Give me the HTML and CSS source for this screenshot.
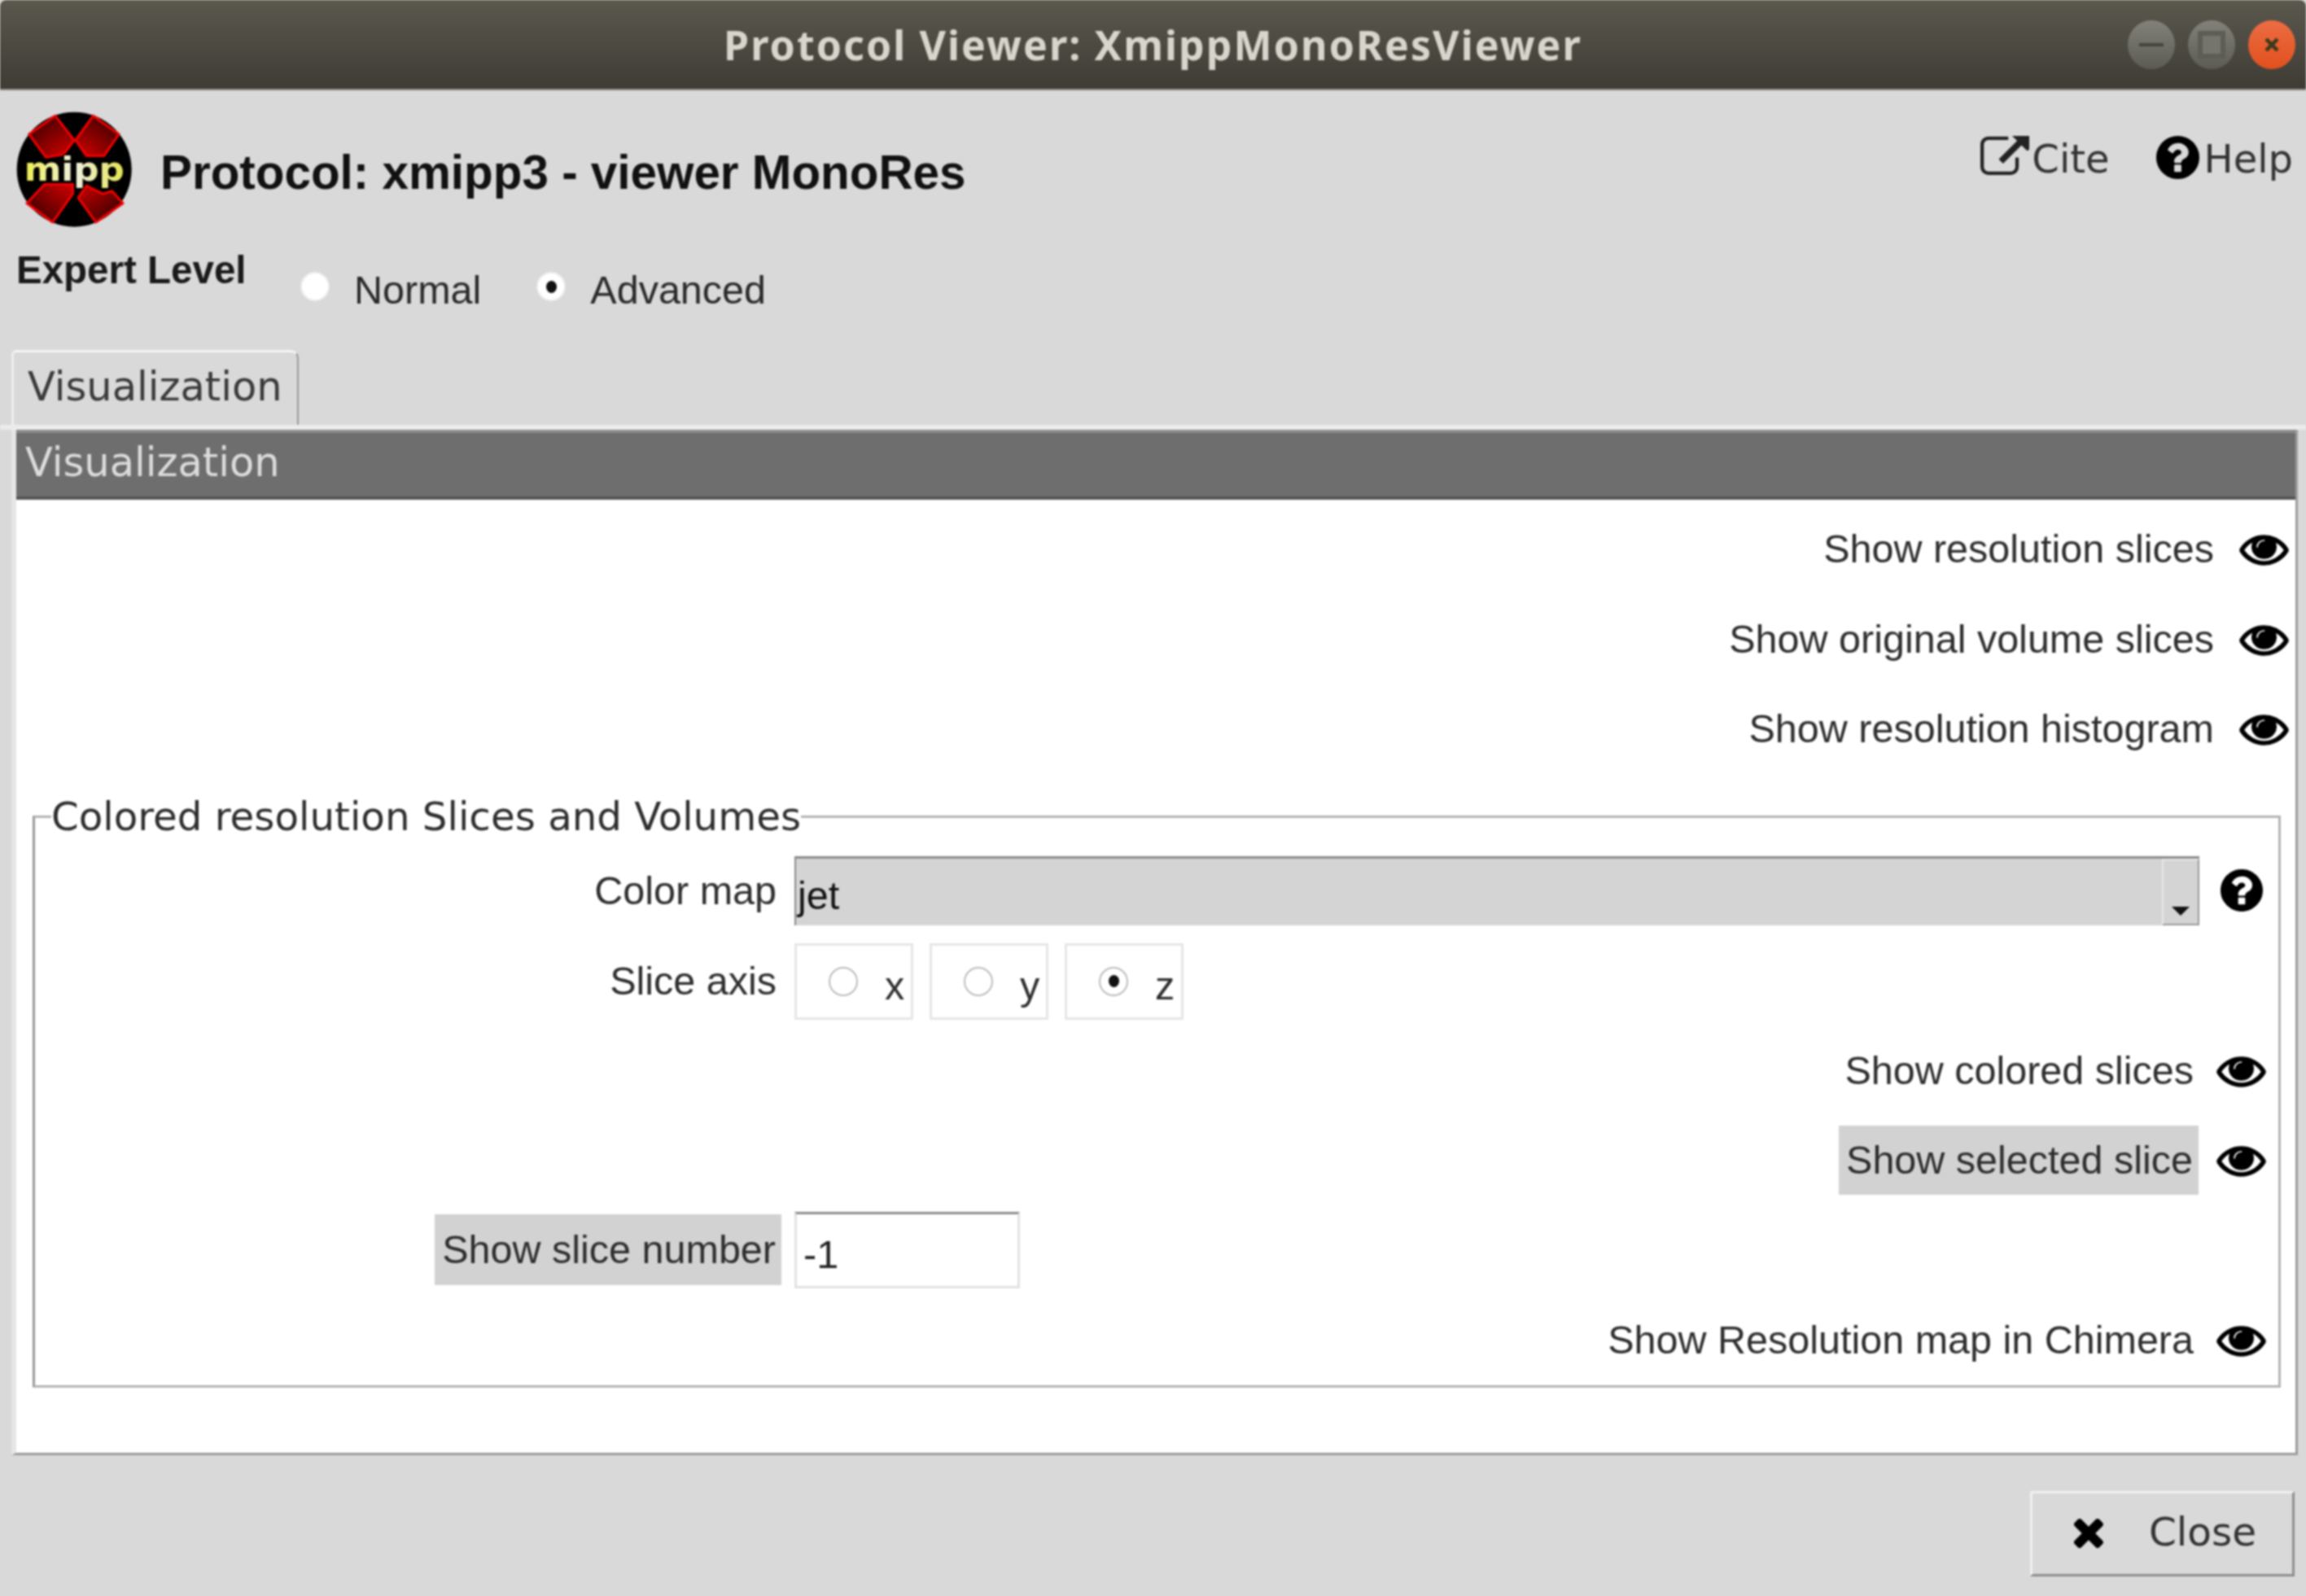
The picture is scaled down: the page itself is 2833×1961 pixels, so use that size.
FILE: index.html
```html
<!DOCTYPE html>
<html lang="en">
<head>
    <meta charset="UTF-8">
    <title>Protocol Viewer: XmippMonoResViewer</title>
    <link rel="stylesheet" href="styles.css">
</head>
<body>
    <svg class="icon-defs" aria-hidden="true">
        <symbol id="i-eye" viewBox="-30 226 1852 1340" preserveAspectRatio="none"><path stroke="#000" stroke-width="46" d="M1664 960q-152-236-381-353 61 104 61 225 0 185-131.5 316.5t-316.5 131.5-316.5-131.5-131.5-316.5q0-121 61-225-229 117-381 353 133 205 333.5 326.5t434.5 121.5 434.5-121.5 333.5-326.5zm-720-384q0-20-14-34t-34-14q-125 0-214.5 89.5t-89.5 214.5q0 20 14 34t34 14 34-14 14-34q0-86 61-147t147-61q20 0 34-14t14-34zm848 384q0 34-20 69-140 230-376.5 368.5t-499.5 138.5-499.5-139-376.5-368q-20-35-20-69t20-69q140-229 376.5-368t499.5-139 499.5 139 376.5 368q20 35 20 69z"/></symbol>
        <symbol id="i-help" viewBox="128 128 1536 1536"><path d="M1024 1376v-192q0-14-9-23t-23-9h-192q-14 0-23 9t-9 23v192q0 14 9 23t23 9h192q14 0 23-9t9-23zm256-672q0-88-55.5-163t-138.5-116-170-41q-243 0-371 213-15 24 8 42l132 100q7 6 19 6 16 0 25-12 53-68 86-92 34-24 86-24 48 0 85.5 26t37.5 59q0 38-20 61t-68 45q-63 28-115.5 86.5t-52.5 125.5v36q0 14 9 23t23 9h192q14 0 23-9t9-23q0-19 21.5-49.5t54.5-49.5q32-18 49-28.5t46-35 44.5-48 28-60.5 12.5-81zm384 192q0 209-103 385.5t-279.5 279.5-385.5 103-385.5-103-279.5-279.5-103-385.5 103-385.5 279.5-279.5 385.5-103 385.5 103 279.5 279.5 103 385.5z"/></symbol>
        <symbol id="i-link" viewBox="0 128 1792 1536"><path d="M1408 928v320q0 119-84.5 203.5t-203.5 84.5h-832q-119 0-203.5-84.5t-84.5-203.5v-832q0-119 84.5-203.5t203.5-84.5h704q14 0 23 9t9 23v64q0 14-9 23t-23 9h-704q-66 0-113 47t-47 113v832q0 66 47 113t113 47h832q66 0 113-47t47-113v-320q0-14 9-23t23-9h64q14 0 23 9t9 23zm384-864v512q0 26-19 45t-45 19-45-19l-176-176-652 652q-10 10-23 10t-23-10l-114-114q-10-10-10-23t10-23l652-652-176-176q-19-19-19-45t19-45 45-19h512q26 0 45 19t19 45z"/></symbol>
        <symbol id="i-times" viewBox="242 238 1248 1316"><path d="M1490 1322q0 40-28 68l-136 136q-28 28-68 28t-68-28l-294-294-294 294q-28 28-68 28t-68-28l-136-136q-28-28-28-68t28-68l294-294-294-294q-28-28-28-68t28-68l136-136q28-28 68-28t68 28l294 294 294-294q28-28 68-28t68 28l136 136q28 28 28 68t-28 68l-294 294 294 294q28 28 28 68z"/></symbol>
    </svg>

    <div class="window">
        <div class="titlebar">
            <span></span>
            <div class="title">Protocol Viewer: XmippMonoResViewer</div>
            <div class="win-buttons">
                <span class="win-btn"><span class="win-min"></span></span>
                <span class="win-btn"><span class="win-max"></span></span>
                <span class="win-btn win-close">
                    <svg width="24" height="24" viewBox="0 0 24 24"><path d="M5 5L19 19M19 5L5 19" stroke="#3a3a1c" stroke-width="4.5"/></svg>
                </span>
            </div>
        </div>

        <div class="header">
            <svg class="logo" viewBox="55 75 445 445">
                <defs>
                    <radialGradient id="logo-red" gradientUnits="userSpaceOnUse" cx="275" cy="295" r="215">
                        <stop offset="0.2" stop-color="#d80000"/>
                        <stop offset="1" stop-color="#4c0000"/>
                    </radialGradient>
                    <linearGradient id="logo-text" x1="0" x2="1" y1="0" y2="0">
                        <stop offset="0" stop-color="#eeee4e"/>
                        <stop offset="0.5" stop-color="#f0f0e0"/>
                        <stop offset="1" stop-color="#e4e454"/>
                    </linearGradient>
                </defs>
                <circle cx="275" cy="295" r="212" fill="#000"/>
                <g fill="url(#logo-red)" stroke="#f00000" stroke-width="9" stroke-linejoin="round">
                    <polygon points="108,165 205,97 275,187 235,240 170,250"/>
                    <polygon points="345,97 440,165 385,245 320,245 280,187"/>
                    <polygon points="100,420 165,350 270,350 270,385 195,490"/>
                    <polygon points="290,400 320,355 380,385 415,375 455,420 355,490"/>
                </g>
                <text class="logo-text" x="90" y="336" textLength="370" lengthAdjust="spacingAndGlyphs" fill="url(#logo-text)" stroke="#000" stroke-width="8" paint-order="stroke">mipp</text>
            </svg>
            <h1 class="heading">Protocol: xmipp3 - viewer MonoRes</h1>
            <div class="links">
                <span class="link link-cite"><svg class="link-icon cite-icon"><use href="#i-link"/></svg>Cite</span>
                <span class="link"><svg class="link-icon"><use href="#i-help"/></svg>Help</span>
            </div>
        </div>

        <div class="expert">
            <span class="expert-label">Expert Level</span>
            <span class="expert-option"><span class="radio radio-gray"></span>Normal</span>
            <span class="expert-option"><span class="radio radio-gray radio-on"></span>Advanced</span>
        </div>

        <div class="tabs">
            <div class="tab">Visualization</div>
        </div>

        <div class="panel">
            <div class="section-bar">Visualization</div>

            <div class="top-rows">
                <div class="eye-row">Show resolution slices<svg class="eye"><use href="#i-eye"/></svg></div>
                <div class="eye-row">Show original volume slices<svg class="eye"><use href="#i-eye"/></svg></div>
                <div class="eye-row">Show resolution histogram<svg class="eye"><use href="#i-eye"/></svg></div>
            </div>

            <fieldset class="group">
                <legend class="group-title">Colored resolution Slices and Volumes</legend>

                <div class="form-row">
                    <span class="form-label">Color map</span>
                    <div class="combo">
                        <span class="combo-value">jet</span>
                        <span class="combo-btn"><span class="combo-arrow"></span></span>
                    </div>
                    <svg class="help-icon"><use href="#i-help"/></svg>
                </div>

                <div class="form-row">
                    <span class="form-label">Slice axis</span>
                    <div class="axis-options">
                        <span class="axis-option"><span class="radio"></span>x</span>
                        <span class="axis-option"><span class="radio"></span>y</span>
                        <span class="axis-option"><span class="radio radio-on"></span>z</span>
                    </div>
                </div>

                <div class="eye-row eye-row-inner">Show colored slices<svg class="eye"><use href="#i-eye"/></svg></div>
                <div class="eye-row eye-row-inner"><span class="pressed pressed-selected">Show selected slice</span><svg class="eye"><use href="#i-eye"/></svg></div>

                <div class="form-row">
                    <span class="form-label"><span class="pressed pressed-number">Show slice number</span></span>
                    <div class="entry">-1</div>
                </div>

                <div class="eye-row eye-row-inner">Show Resolution map in Chimera<svg class="eye"><use href="#i-eye"/></svg></div>
            </fieldset>
        </div>

        <div class="footer">
            <div class="close-btn"><svg class="close-icon"><use href="#i-times"/></svg>Close</div>
        </div>
    </div>
</body>
</html>
```

FILE: styles.css
```css
html, body {
    margin: 0;
    padding: 0;
}
body {
    width: 2833px;
    height: 1961px;
    overflow: hidden;
    background-color: #d9d9d9;
    color: #2a2a2a;
    font-family: "Liberation Sans", sans-serif;
    font-size: 48.5px;
    line-height: 56px;
}
.icon-defs {
    display: none;
}
.window {
    height: 1961px;
    display: flex;
    flex-direction: column;
    filter: blur(1px);
}

/* title bar */
.titlebar {
    height: 111px;
    flex: none;
    box-sizing: border-box;
    border-bottom: 2px solid #8a8a84;
    background: linear-gradient(#5b584e, #3e3c35);
    border-radius: 8px 8px 0 0;
    display: grid;
    grid-template-columns: 1fr auto 1fr;
    align-items: center;
}
.title {
    font-family: "Noto Sans", sans-serif;
    font-weight: 700;
    font-size: 50px;
    letter-spacing: 2.1px;
    color: #d8d5cc;
}
.win-buttons {
    justify-self: end;
    display: flex;
    gap: 16px;
    padding-right: 13px;
}
.win-btn {
    width: 58px;
    height: 60px;
    border-radius: 50%;
    background: linear-gradient(#83827a, #5b5a54);
    display: flex;
    align-items: center;
    justify-content: center;
}
.win-min {
    width: 30px;
    height: 4px;
    background: #45443e;
}
.win-max {
    width: 22px;
    height: 22px;
    border: 6px solid #5d5c55;
    background: #75746d;
}
.win-close {
    background: linear-gradient(#ec6d43, #e2501d);
}

/* header */
.header {
    height: 187px;
    flex: none;
    box-sizing: border-box;
    display: flex;
    padding: 24px 16px 0 18px;
}
.logo {
    width: 148px;
    height: 148px;
    flex: none;
}
.logo-text {
    font-family: "DejaVu Sans", sans-serif;
    font-weight: 700;
    font-size: 124px;
}
.heading {
    margin: 43px 0 0 31px;
    font-size: 58.4px;
    line-height: 68px;
    font-weight: 700;
    color: #111;
}
.links {
    margin-left: auto;
    display: flex;
    gap: 57px;
    padding-top: 32px;
    font-family: "DejaVu Sans", sans-serif;
    font-size: 48px;
    color: #333;
}
.link {
    display: flex;
    align-items: flex-start;
    gap: 6px;
}
.link-cite {
    gap: 3px;
}
.link-icon {
    width: 53px;
    height: 53px;
    fill: #000;
}
.cite-icon {
    width: 60px;
    fill: #222;
}

/* expert level */
.expert {
    height: 132px;
    flex: none;
    box-sizing: border-box;
    display: flex;
    align-items: flex-start;
    padding: 6px 0 0 20px;
}
.expert-label {
    font-weight: 700;
    font-size: 47.5px;
    color: #1a1a1a;
    width: 349px;
}
.expert-option {
    display: flex;
    align-items: center;
    gap: 30px;
    margin-top: 24px;
    margin-right: 68px;
}

/* radios */
.radio {
    width: 36px;
    height: 36px;
    flex: none;
    box-sizing: border-box;
    border: 2px solid #bdbdbd;
    border-radius: 50%;
    background: #fff;
    display: flex;
    align-items: center;
    justify-content: center;
    margin-top: -8px;
}
.radio-gray {
    border-color: #ececec;
}
.radio-on::after {
    content: "";
    width: 13px;
    height: 15px;
    border-radius: 50%;
    background: #111;
}

/* tabs */
.tabs {
    flex: none;
    height: 98px;
    padding-left: 14px;
    display: flex;
    box-sizing: border-box;
    border-bottom: 6px solid #ececec;
}
.tab {
    width: 353px;
    box-sizing: border-box;
    border-top: 3px solid #f4f4f4;
    border-left: 3px solid #eeeeee;
    border-right: 2px solid #9a9a9a;
    border-radius: 6px 10px 0 0;
    padding: 14px 0 0 17px;
    font-family: "DejaVu Sans", sans-serif;
    font-size: 49.5px;
    color: #3a3a3a;
}

/* main panel */
.panel {
    flex: none;
    height: 1260px;
    margin: 0 10px 0 14px;
    box-sizing: border-box;
    border-left: 6px solid #e6e6e6;
    border-right: 3px solid #9c9c9c;
    border-bottom: 3px solid #9c9c9c;
    background: #fff;
}
.section-bar {
    height: 86px;
    box-sizing: border-box;
    background: #6e6e6e;
    border-top: 4px solid #8c8c8c;
    border-bottom: 4px solid #555;
    padding: 8px 0 0 11px;
    font-family: "DejaVu Sans", sans-serif;
    font-size: 49.5px;
    color: #dcdcdc;
}
.top-rows {
    padding: 5px 0 0;
    height: 361px;
    box-sizing: border-box;
}
.eye-row {
    height: 110.4px;
    display: flex;
    align-items: center;
    justify-content: flex-end;
    padding-right: 8px;
    color: #2e2e2e;
}
.eye {
    width: 61px;
    height: 42px;
    margin-left: 31px;
    fill: #000;
    flex: none;
}

/* group box */
.group {
    margin: 0 18px 0 20px;
    padding: 8px 0 0;
    height: 730px;
    box-sizing: border-box;
    border: 3px solid #b4b4b4;
    border-left-color: #999;
    min-width: 0;
}
.group-title {
    margin-left: 20px;
    padding: 0;
    font-family: "DejaVu Sans", sans-serif;
    font-size: 48.3px;
    color: #2e2e2e;
    line-height: 56px;
}
.form-row {
    height: 110.4px;
    display: flex;
    align-items: center;
    color: #2e2e2e;
}
.form-label {
    width: 911px;
    flex: none;
    text-align: right;
}
.combo {
    width: 1726px;
    height: 85px;
    margin-left: 22px;
    box-sizing: border-box;
    flex: none;
    background: #d4d4d4;
    border-top: 3px solid #8a8a8a;
    border-left: 2px solid #8a8a8a;
    display: flex;
    justify-content: space-between;
}
.combo-value {
    padding: 17px 0 0 2px;
    color: #111;
}
.combo-btn {
    width: 46px;
    box-sizing: border-box;
    border: 2px solid #e8e8e8;
    border-right-color: #999;
    border-bottom-color: #999;
    display: flex;
    align-items: flex-end;
    justify-content: center;
    padding-bottom: 10px;
}
.combo-arrow {
    border-left: 11px solid transparent;
    border-right: 11px solid transparent;
    border-top: 11px solid #111;
}
.help-icon {
    width: 54px;
    height: 52px;
    margin-left: 25px;
    fill: #000;
    flex: none;
}
.axis-options {
    display: flex;
    gap: 20px;
    margin-left: 22px;
    margin-top: 2px;
}
.axis-option {
    width: 146px;
    height: 94px;
    box-sizing: border-box;
    border: 3px solid #e6e6e6;
    display: flex;
    align-items: center;
    padding: 10px 0 0 39px;
    gap: 33px;
}
.axis-option .radio {
    margin-top: -10px;
}
.pressed {
    display: inline-block;
    background: #d2d2d2;
    padding: 14px 7px 15px 9px;
}
.pressed-selected {
    margin-right: -6px;
}
.pressed-number {
    padding-top: 15px;
    padding-bottom: 16px;
    margin-right: -6px;
}
.entry {
    width: 277px;
    height: 94px;
    margin-left: 22px;
    box-sizing: border-box;
    border: 3px solid #e2e2e2;
    border-top-color: #8e8e8e;
    padding: 21px 0 0 8px;
    color: #222;
}
.eye-row-inner {
    padding-right: 15px;
}
.eye-row-inner .eye {
    margin-left: 28px;
}

/* footer */
.footer {
    flex: 1;
    display: flex;
    justify-content: flex-end;
    padding: 44px 14px 0 0;
    align-items: flex-start;
}
.close-btn {
    width: 325px;
    height: 105px;
    box-sizing: border-box;
    border: 3px solid #f0f0f0;
    border-right-color: #8e8e8e;
    border-bottom-color: #8e8e8e;
    display: flex;
    align-items: center;
    padding: 0 0 6px 47px;
    gap: 54px;
    font-family: "DejaVu Sans", sans-serif;
    font-size: 48.5px;
    color: #333;
}
.close-icon {
    width: 42px;
    height: 40px;
    fill: #000;
    flex: none;
}
```
